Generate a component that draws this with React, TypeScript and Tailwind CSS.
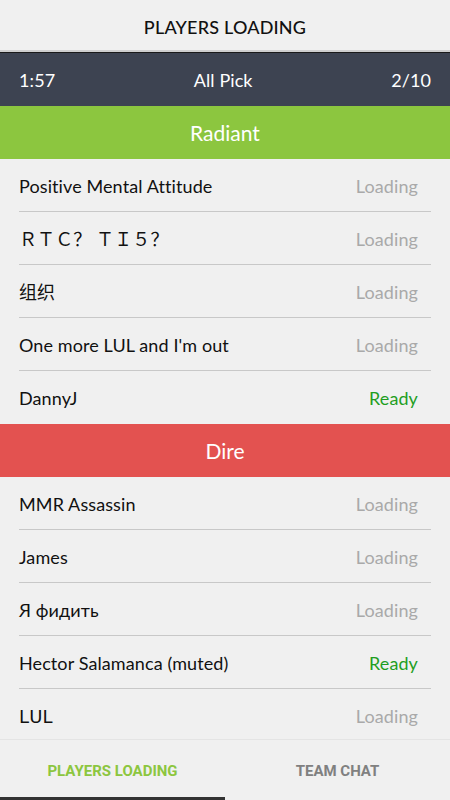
const radiant = [
  { name: "Positive Mental Attitude", ready: false },
  { name: "ＲＴＣ？ ＴＩ５？", ready: false },
  { name: "组织", ready: false },
  { name: "One more LUL and I'm out", ready: false },
  { name: "DannyJ", ready: true },
];

const dire = [
  { name: "MMR Assassin", ready: false },
  { name: "James", ready: false },
  { name: "Я фидить", ready: false },
  { name: "Hector Salamanca (muted)", ready: true },
  { name: "ᒪᑌᒪ", ready: false },
];

type Player = { name: string; ready: boolean };

function PlayerList({ players }: { players: Player[] }) {
  return (
    <div className="px-[19px]">
      {players.map((p, i) => (
        <div
          key={i}
          className={
            "flex h-[53px] items-center justify-between pt-[2px] " +
            (i < players.length - 1 ? "border-b border-[#c8c8c8]" : "")
          }
        >
          <span className="text-[18px] tracking-[0.1px] text-[#111]">{p.name}</span>
          <span
            className={
              "pr-[13px] text-[18px] tracking-[0.1px] " +
              (p.ready ? "text-[#1f9e1f]" : "text-[#a9a9a9]")
            }
          >
            {p.ready ? "Ready" : "Loading"}
          </span>
        </div>
      ))}
    </div>
  );
}

export default function App() {
  return (
    <div className="flex h-[800px] w-[450px] flex-col overflow-hidden bg-[#f0f0f0] font-['Lato','Noto_Sans_CJK_SC','DejaVu_Sans',sans-serif]">
      {/* Header */}
      <header className="flex h-[50px] items-center justify-center pt-[5px]">
        <h1 className="text-[18px] font-medium tracking-[0.2px] text-[#111]">
          PLAYERS LOADING
        </h1>
      </header>
      <div className="h-[3px] border-b border-[#1a1a1a] bg-[#cfcfcf]" />

      {/* Match info */}
      <div className="flex h-[53px] items-center justify-between bg-[#3d4351] px-[19px] pt-[2px] text-[18px] tracking-[0.1px] text-white">
        <span>1:57</span>
        <span>All Pick</span>
        <span>2/10</span>
      </div>

      <main className="min-h-0 flex-1">
        <div className="flex h-[53px] items-center justify-center bg-[#8cc63f] text-[21px] text-white">
          Radiant
        </div>
        <PlayerList players={radiant} />
        <div className="flex h-[53px] items-center justify-center bg-[#e35250] text-[21px] text-white">
          Dire
        </div>
        <PlayerList players={dire} />
      </main>

      {/* Tabs */}
      <nav className="flex h-[61px] border-t border-[#e4e4e4] font-['Roboto',sans-serif] text-[15px] font-bold">
        <div className="flex flex-1 flex-col">
          <div className="flex flex-1 items-center justify-center pt-[5px] text-[#8cc63f]">
            PLAYERS LOADING
          </div>
          <div className="h-[3px] bg-[#333]" />
        </div>
        <div className="flex flex-1 items-center justify-center pb-[3px] pt-[5px] text-[#808080]">
          TEAM CHAT
        </div>
      </nav>
    </div>
  );
}
